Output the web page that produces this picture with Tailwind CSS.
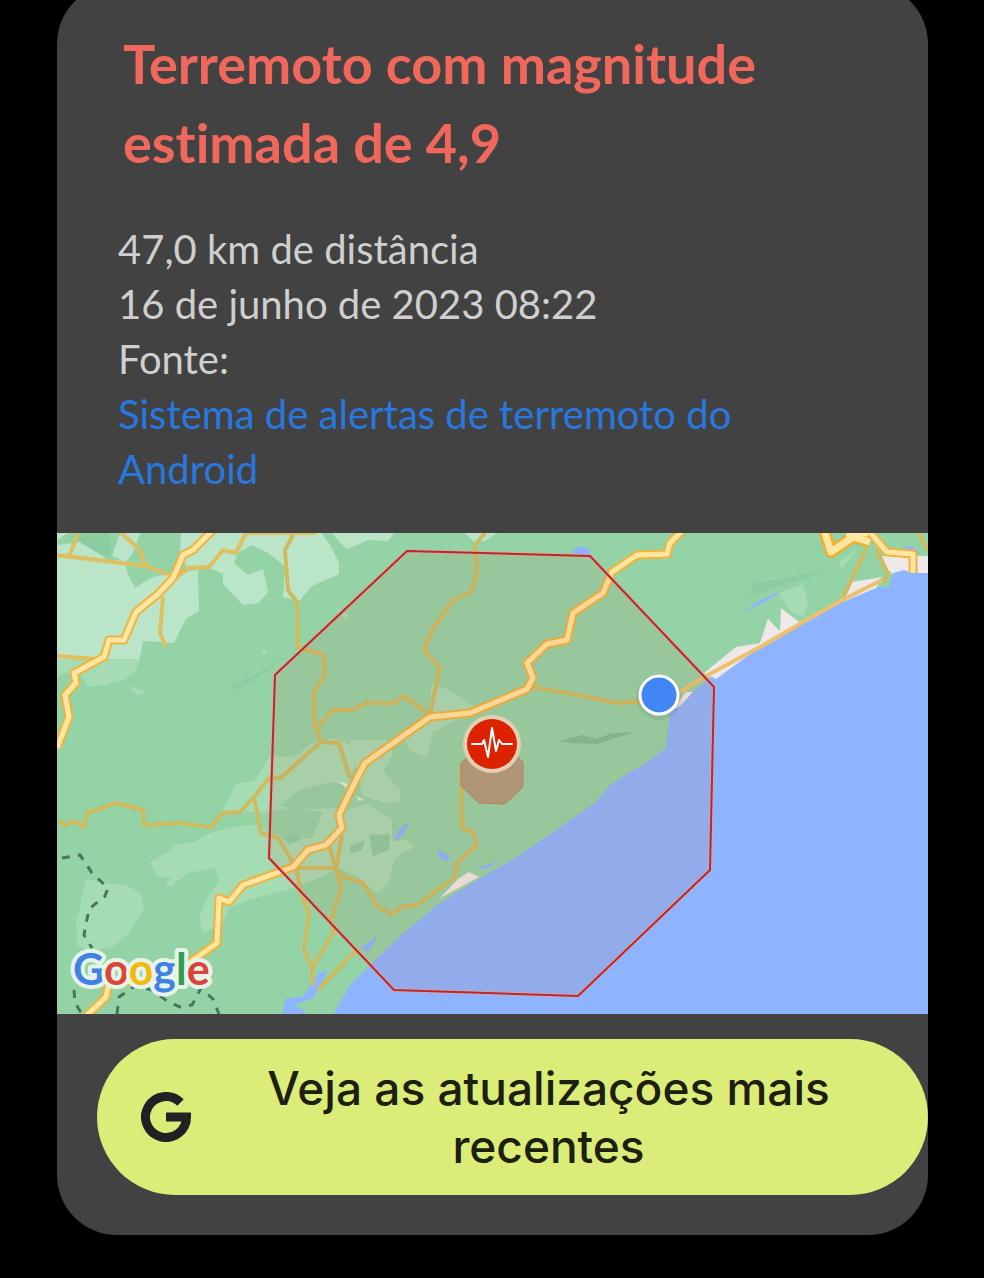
<!DOCTYPE html>
<html lang="pt-BR">

<head>
    <meta charset="UTF-8">
    <meta name="viewport" content="width=device-width, initial-scale=1.0">
    <title>Alerta de terremoto</title>
    <script src="https://cdn.jsdelivr.net/npm/@tailwindcss/browser@4"></script>
</head>

<body class="bg-black overflow-x-hidden min-h-screen">
    <main class="overflow-hidden pl-[57px] pr-14 pb-10">
        <article class="-mt-4 overflow-hidden rounded-[60px] bg-[#424242] pt-10 pb-10 font-['Lato',sans-serif] [font-variant-ligatures:none]">
            <header class="pl-[66px] pr-20">
                <h1 class="text-[54px] leading-[79px] font-bold text-[#f0675c]">Terremoto com magnitude estimada de 4,9</h1>
            </header>
            <div class="pt-[40px] pl-[61px] pr-20 pb-[36px] text-[40px] leading-[55px] text-[#cfcfcf]">
                <p>47,0 km de distância</p>
                <p>16 de junho de 2023 08:22</p>
                <p>Fonte:</p>
                <a href="#" class="block text-[#2878e0]">Sistema de alertas de terremoto do Android</a>
            </div>

            <!-- map -->
            <svg class="block w-full" viewBox="57 533 871 481" role="img" aria-label="Mapa do terremoto">
                <rect x="56" y="532" width="873" height="483" fill="#94d3a6" />
                <!-- lighter land -->
                <g fill="#bbe5c8">
                    <path d="M56 533H68L56 541ZM120 533H140L134 551L126 562L112 556L116 545ZM56 545L80 542L96 552L108 560L124 560L128 575L135 588L150 578L170 573L198 570L199 611L186 619L174 643L143 641L139 662L126 668L56 660Z" />
                    <path d="M181 533H322L330 545L339 563V574L312 586L299 601L283 597L285 566L268 553L252 545L238 553L234 563L248 575L263 569L268 592L259 603L243 605L223 584V574L208 567L186 566L180 553Z" />
                    <path d="M332 533H394L388 541L368 540L353 547L346 549ZM465 533H497L485 541L474 542Z" />
                </g>
                <g fill="#a6dcb4">
                    <path d="M56 659L140 659L135 671L124 680L106 685L88 687L80 674L63 673L56 679Z" />
                    <path d="M128 686L142 690L144 694L137 695ZM262 649L268 651L263 657ZM332 605L348 614V621Z" />
                    <path d="M150 862L170 851L174 845L195 842L211 833L238 826L258 825L272 834L293 840L312 838L323 812L290 808L268 812L222 812L236 784L254 781L271 755L293 757L313 743L335 738L350 745L360 750L350 778L342 812L366 803L392 819L392 841L407 840L414 848L401 854L394 860L389 882L378 894L357 877L340 868L312 881L294 888L248 900L229 908L222 924L203 933L199 917L208 896L219 881L215 868L187 873L171 887L165 883L172 878L157 876Z" />
                    <path d="M86 879L101 882L125 885L140 893L144 908L130 932L114 946L92 951L77 946L76 921L80 909L82 894Z" />
                    <path d="M431 684L449 690L475 707L470 713L433 732L427 758L410 750L404 739L430 717Z" />
                    <path d="M350 740L390 740L393 755L383 771L400 790L400 802L384 803L362 795Z" />
                    <path d="M779 593L803 584L808 603L803 617L792 613ZM838 563L858 548L842 568Z" />
                </g>
                <!-- hill shades -->
                <g fill="#8bcca0">
                    <path d="M754 583L780 579L824 570L806 579L783 585L750 596ZM231 686L262 671L280 660L266 673L235 690Z" />
                    <path d="M560 741L582 735L596 739L612 733L636 732L615 738L597 744L570 743Z" fill="#7fbd93" />
                    <path d="M78 533H108L111 545L110 558L96 552L80 542L73 538ZM369 835L390 834L389 850L373 856ZM350 846L365 840L362 850L350 853ZM283 839L296 832L300 840L290 844Z" />
                    <path d="M280 806L300 790L330 782L350 786L340 808L300 809Z" opacity=".6" />
                </g>
                <!-- sea, lagoons -->
                <g fill="#8eb4ff">
                    <path d="M929 573L916 573L907 570H895L890 580L880 587L847 598L807 620L760 645L717 673L693 692L670 713L668 730L666 748L640 767L633 770L610 785L595 803L563 825L517 857L477 880L440 903L407 930L373 962L350 985L343 997L333 1015H929Z" />
                    <path d="M282 1015L286 998L303 997L320 972L328 971L313 998L294 1005L306 1012L304 1015ZM572 552L578 547H588L591 555H576ZM744 613L760 600L783 590L768 600ZM902 547L912 546L920 553L910 555ZM394 842L399 829L411 821L402 836ZM437 849L450 856L447 861L439 858ZM476 868L500 861L487 869ZM361 947L378 936L368 953Z" />
                </g>
                <!-- towns and beaches -->
                <path d="M704 673L736 647L760 643L768 619L780 631L781 608L799 622L845 598L852 582L882 577L876 588L838 604L800 625L760 647L716 679ZM882 556L928 556V573H912L904 570L890 574ZM676 705L686 692L693 692L680 706L660 716ZM440 898L458 879L469 872L479 877L455 890Z" fill="#eee9e8" />
                <path d="M884 574L891 571L889 588L880 587Z" fill="#94d3a6" />
                <path d="M338 781L348 784L346 788ZM356 796L364 800L359 801Z" fill="#e5ebe3" />
                <!-- small roads -->
                <g fill="none" stroke="#cfbb5e" stroke-width="4" stroke-linejoin="round">
                    <path d="M56 555L146 566L169 575M78 534L69 557M121 533L138 548L146 566M172 580L189 568L209 567L223 550L236 553L246 533H316M163 597L160 633L166 647M56 656L96 659" stroke="#e0bf60" />
                    <path d="M293 535L285 550L288 590L297 602L298 647L323 655L325 673L314 693V723L321 742L286 773L280 778L268 779L254 797L240 812L223 813L211 827L179 823L144 825L143 810L116 803L87 813L84 827L74 821L66 825L56 820" />
                    <path d="M316 729L333 710H352L367 703H395L403 696L430 714M321 742L339 743L350 778M254 797L261 833L278 838L293 863" />
                    <path d="M485 533L475 545L477 573L471 592L453 600L432 630L424 650L440 668L430 715M532 687L583 696L617 703L645 701" />
                    <path d="M293 868H334L344 877L363 883L378 907L392 914L402 907L417 905L455 877L457 863L477 845L473 832L462 828L461 765M296 867L301 893L309 913L304 950L312 967L313 985M329 845L336 869L342 835M336 869L341 887L331 920L333 933L312 969M357 949L318 990" />
                    <path d="M842 600L866 549M876 550L888 574L884 583" />
                    <path d="M680 692L706 676L760 647L805 621L842 600L882 580" stroke="#ecc06d" />
                    <path d="M918 533L930 553" />
                </g>
                <!-- highways -->
                <g fill="none" stroke-linejoin="round">
                    <g stroke="#f0b33e" stroke-width="9">
                        <path id="west" d="M213 530L193 550L183 555L173 578L158 594L136 612L124 640H109L104 657L74 673L76 683L65 695L69 717L57 748" />
                        <path id="main" d="M683 530L670 543L667 554L637 555L612 572L603 593L573 613L567 640L547 644L527 663L533 678L527 689L470 713L430 717L365 763L356 780L339 815L342 828L326 845L308 850L293 867L243 885L229 902L219 898L217 943L189 963L150 980L109 983L106 997L84 1018" />
                        <path id="east" d="M868 530L887 552L913 554V573" />
                    </g>
                    <path d="M824 530L831 552L853 537L870 542M846 533H868" stroke="#f5ae2b" stroke-width="12" />
                    <g stroke="#ffe6a2" stroke-width="5">
                        <use href="#west" />
                        <use href="#main" />
                        <use href="#east" />
                        <path d="M824 530L831 552L853 537L870 542M846 533H868" stroke-width="7" />
                    </g>
                </g>
                <!-- state border -->
                <path d="M62 858L80 855L92 873L108 888L105 896L89 909L84 935L92 948M74 990L75 1003L82 1014M117 1014L119 997L135 986L152 990L167 1001L180 1007L192 1005L201 988L213 999L219 1014" fill="none" stroke="#47765a" stroke-width="3" stroke-dasharray="8 8" />
                <!-- alert area -->
                <path d="M407 551L590 556L714 687L710 870L578 996L394 990L269 858L275 675Z" fill="#be643c" fill-opacity=".1" stroke="#f0a093" stroke-width="4" stroke-opacity=".6" />
                <path d="M407 551L590 556L714 687L710 870L578 996L394 990L269 858L275 675Z" fill="none" stroke="#b8282c" stroke-width="2" />
                <path d="M461 763L478 748H508L523 762V787L505 804L479 803L461 786Z" fill="#b09676" stroke="#b0835e" stroke-width="1" />
                <!-- epicentre -->
                <circle cx="492" cy="744" r="29" fill="#e0d0b4" />
                <circle cx="492" cy="744" r="25" fill="#dd2200" />
                <path d="M472 744H482L484 740L488 757L492 728L496 751L499 740L502 744H512" fill="none" stroke="#fff" stroke-width="2" stroke-linejoin="round" stroke-linecap="round" />
                <!-- current location -->
                <circle cx="659" cy="697" r="23" fill="#486b66" fill-opacity=".14" />
                <circle cx="659" cy="695" r="19" fill="#4285f4" stroke="#fff" stroke-width="3" />
                <text x="73" y="985" font-size="43" font-weight="700" stroke="#e6f3e8" stroke-width="8" stroke-linejoin="round" paint-order="stroke" class="font-['Lato',sans-serif]"><tspan fill="#4081e4">G</tspan><tspan fill="#db4438">o</tspan><tspan fill="#f2b90f">o</tspan><tspan fill="#4081e4">g</tspan><tspan fill="#2e9c51">l</tspan><tspan fill="#db4438">e</tspan></text>
            </svg>

            <div class="pt-[25px] pl-10">
                <button type="button" class="flex w-full items-center rounded-full bg-[#dbec79] py-5 pr-[62px] pl-11 text-[#1d1f10]">
                    <svg class="size-[50px] shrink-0" viewBox="0 0 50 50" fill="none" stroke="#202124" stroke-width="9" aria-hidden="true">
                        <path d="M39.500 10.500A20.500 20.500 0 1 0 45.500 25H25" />
                    </svg>
                    <span class="ml-10 flex-1 text-center text-[46px] leading-[58px] font-medium font-['Inter',sans-serif]">Veja as atualizações mais recentes</span>
                </button>
            </div>
        </article>
    </main>
</body>

</html>
